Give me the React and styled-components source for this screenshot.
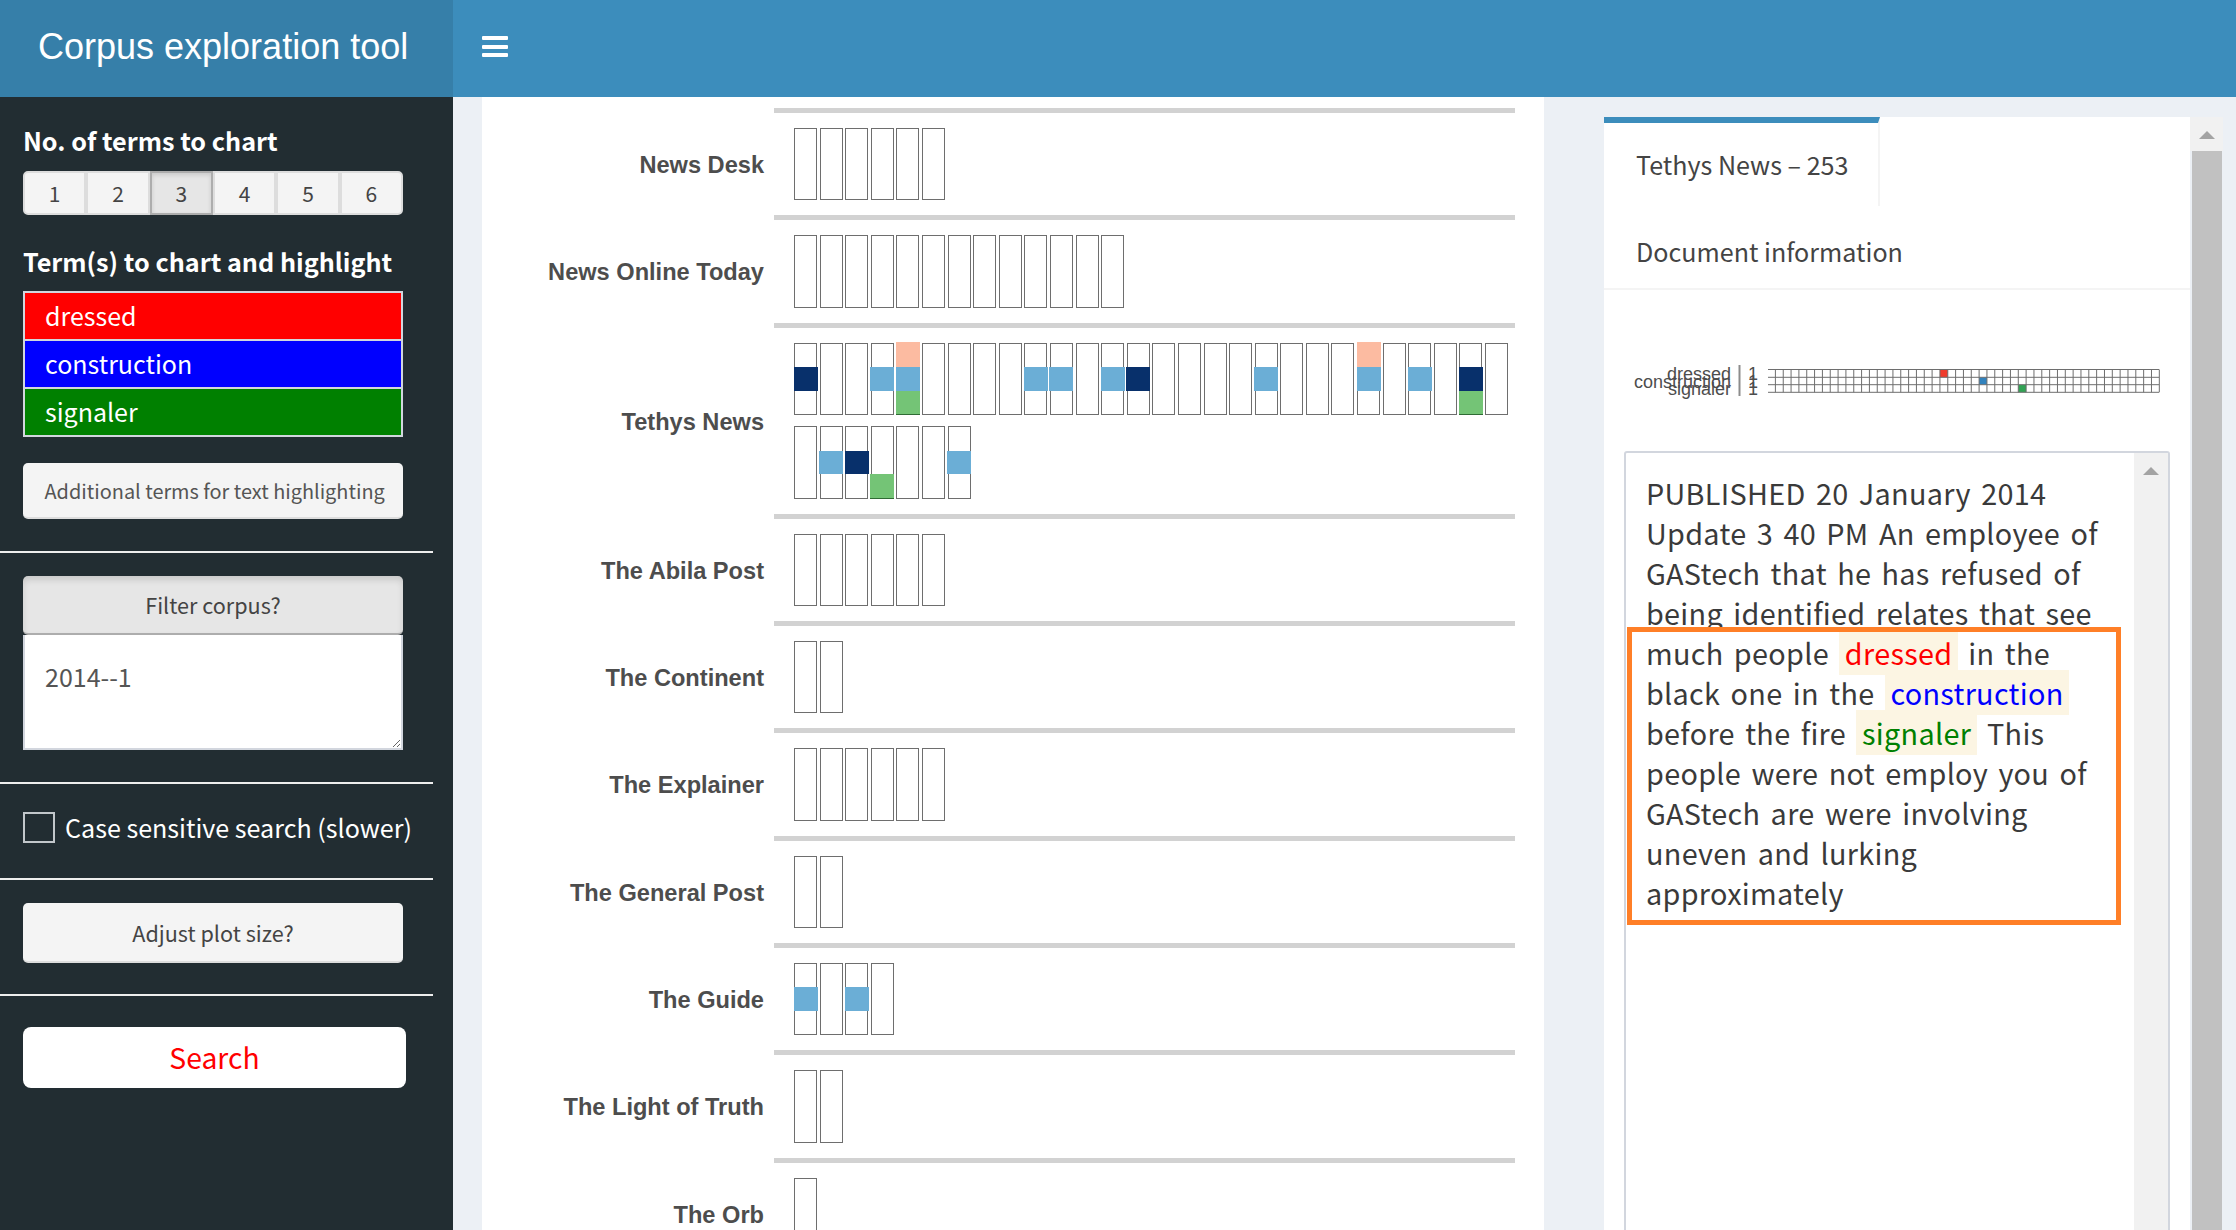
import React from "react"
import styled, { createGlobalStyle } from "styled-components"

const SANS = `"Noto Sans CJK SC", "Noto Sans", sans-serif`
const ARIAL = `"Liberation Sans", Arial, sans-serif`

const GlobalStyle = createGlobalStyle`
    html, body {
        margin: 0;
        height: 100%;
        overflow: hidden;
        background-color: #ecf0f5;
    }
    * {
        box-sizing: border-box;
    }
`

const Page = styled("div")`
    width: 2236px;
    height: 1230px;
    display: flex;
    flex-direction: column;
    overflow: hidden;
    font-family: ${SANS};
`

const Header = styled("header")`
    display: flex;
    flex: 0 0 97px;
    background-color: #3c8dbc;
`

const Logo = styled("div")`
    width: 453px;
    padding-left: 38px;
    background-color: #367fa9;
    color: #fff;
    font-family: ${ARIAL};
    font-size: 36px;
    line-height: 94px;
`

const MenuToggle = styled("button")`
    display: flex;
    flex-direction: column;
    justify-content: center;
    gap: 4.7px;
    width: 112px;
    padding: 0 0 4px 29px;
    background-color: transparent;
    border: 0;
`

const MenuBar = styled("span")`
    width: 26px;
    height: 4px;
    border-radius: 1px;
    background-color: #fff;
`

const Body = styled("div")`
    display: flex;
    flex: 1;
    min-height: 0;
`

const Sidebar = styled("aside")`
    flex: 0 0 453px;
    padding-top: 29px;
    background-color: #222d32;
`

const Group = styled("div")`
    padding-left: 23px;
    width: 433px;
`

const Heading = styled("div")`
    color: #fff;
    font-size: 25.2px;
    font-weight: 700;
    line-height: 28px;
    margin-top: ${(p) => p.$top || 0}px;
    margin-bottom: ${(p) => p.$bottom}px;
`

const ButtonRow = styled("div")`
    display: flex;
    width: 380px;
    height: 44px;
`

const NumberButton = styled("button")`
    flex: 1;
    padding: 0;
    background-color: ${(p) => (p.$active ? "#e6e6e6" : "#f4f4f4")};
    border: 2px solid ${(p) => (p.$active ? "#adadad" : "#ddd")};
    box-shadow: ${(p) => (p.$active ? "inset 0 2px 4px rgba(0, 0, 0, .125)" : "none")};
    color: #444;
    font-family: ${SANS};
    font-size: 21px;
    &:first-child {
        border-radius: 5px 0 0 5px;
    }
    &:last-child {
        border-radius: 0 5px 5px 0;
    }
`

const TermBox = styled("div")`
    display: flex;
    flex-direction: column;
    gap: 2px;
    width: 380px;
    height: 146px;
    padding: 2px;
    background-color: #d2d6de;
`

const Term = styled("div")`
    flex: 1;
    padding-left: 20px;
    background-color: ${(p) => p.$color};
    color: #fff;
    font-size: 25px;
    line-height: 45px;
`

const Placeholder = styled("div")`
    width: 380px;
    height: 56px;
    margin-top: 26px;
    padding-left: 21.5px;
    background-color: #f4f4f4;
    border-bottom: 2px solid #ddd;
    border-radius: 5px;
    color: #555;
    font-size: 19.9px;
    line-height: 55px;
    white-space: nowrap;
`

const Rule = styled("hr")`
    width: 433px;
    height: 2px;
    margin: ${(p) => p.$top}px 0 ${(p) => p.$bottom}px;
    background-color: #eee;
    border: 0;
`

const WideButton = styled("button")`
    display: block;
    width: 380px;
    height: ${(p) => p.$height}px;
    padding: 0;
    background-color: ${(p) => (p.$active ? "#e6e6e6" : "#f4f4f4")};
    border: 0;
    border-bottom: 2px solid ${(p) => (p.$active ? "#adadad" : "#ddd")};
    border-radius: 5px;
    box-shadow: ${(p) => (p.$active ? "inset 0 4px 6px rgba(0, 0, 0, .125)" : "none")};
    color: #444;
    font-family: ${SANS};
    font-size: 21.6px;
`

const FilterInput = styled("textarea")`
    display: block;
    width: 380px;
    height: 115px;
    padding: 21px 20px;
    background-color: #fff;
    border: 2px solid #d2d6de;
    border-top: 0;
    color: #555;
    font-family: ${SANS};
    font-size: 25px;
    line-height: 40px;
    outline: 0;
    resize: vertical;
`

const CheckRow = styled("label")`
    display: flex;
    align-items: center;
    gap: 10px;
    height: 31px;
    color: #fff;
    font-size: 25.1px;
    line-height: 29px;
    white-space: nowrap;
`

const CheckBox = styled("input")`
    appearance: none;
    flex: 0 0 32px;
    height: 31px;
    margin: 0;
    border: 2px solid #c2c7cb;
`

const SearchButton = styled("button")`
    display: block;
    width: 383px;
    height: 61px;
    padding: 0 0 2px;
    background-color: #fff;
    border: 0;
    border-radius: 8px;
    color: #f00;
    font-family: ${SANS};
    font-size: 28.3px;
`

const Content = styled("main")`
    display: flex;
    flex: 1;
    min-width: 0;
    padding-left: 29px;
`

const ChartPanel = styled("section")`
    flex: 0 0 1062px;
    padding: 11px 29px 0 0;
    background-color: #fff;
`

const FacetRow = styled("div")`
    display: grid;
    grid-template-columns: 282px 1fr;
    column-gap: 10px;
`

const FacetLabel = styled("div")`
    align-self: center;
    padding-top: 8px;
    color: #4d4d4d;
    font-family: ${ARIAL};
    font-size: 23.6px;
    font-weight: 700;
    text-align: right;
`

const FacetStrips = styled("div")`
    display: flex;
    flex-direction: column;
    gap: 11.3px;
    padding: 15px 0 15px 20px;
    border-top: 5px solid #d2d2d2;
`

const Strip = styled("div")`
    display: flex;
    gap: 2.6px;
    height: 72.33px;
`

const Bar = styled("div")`
    flex: 0 0 23px;
    display: grid;
    grid-template-rows: repeat(3, 1fr);
    background-color: #fff;
    border: 1.5px solid #6e6e6e;
`

const Segment = styled("div")`
    margin: 0 -1.5px;
    background-color: ${(p) => p.$color};
    ${(p) => p.$last && "margin-bottom: -1.5px; border-bottom: 1.5px solid #2f6b34;"}
    ${(p) => p.$first && "margin-top: -1.5px;"}
`

const DocumentColumn = styled("div")`
    display: flex;
    flex: 0 0 620px;
    margin: 20px 0 0 60px;
`

const DocumentBox = styled("section")`
    flex: 0 0 586px;
    background-color: #fff;
`

const Tab = styled("div")`
    width: 276px;
    height: 89px;
    padding-left: 32px;
    border-top: 6px solid #3c8dbc;
    border-right: 2px solid #f4f4f4;
    color: #444;
    font-size: 25.1px;
    line-height: 83px;
    white-space: nowrap;
`

const TabTitle = styled("div")`
    height: 84px;
    padding: 3px 0 0 32px;
    border-bottom: 2px solid #f4f4f4;
    color: #444;
    font-size: 25.1px;
    line-height: 84px;
`

const TimelinePlot = styled("svg")`
    display: block;
    margin: 74px 0 45px 26px;
`

const TextBox = styled("div")`
    position: relative;
    display: flex;
    width: 546px;
    height: 800px;
    margin-left: 20px;
    border: 2px solid #d2d6de;
    border-radius: 3px;
`

const TextBody = styled("p")`
    flex: 1;
    margin: 0;
    padding: 20px 24px 0 20px;
    color: #3a3a3a;
    font-size: 28.8px;
    letter-spacing: 0.3px;
    word-spacing: 3.6px;
    line-height: 40px;
`

const Mark = styled("mark")`
    padding: 2.2px 5.6px;
    background-color: #fcf5e3;
    color: ${(p) => p.$color};
`

const Callout = styled("div")`
    position: absolute;
    left: 1px;
    top: 174px;
    width: 494px;
    height: 298px;
    border: 5px solid #ff7f27;
    pointer-events: none;
`

const ScrollTrack = styled("div")`
    display: flex;
    flex-direction: column;
    align-items: center;
    flex: 0 0 ${(p) => p.$width}px;
    padding-top: ${(p) => p.$pad}px;
    background-color: #f1f1f1;
`

const ScrollArrow = styled("div")`
    width: 0;
    height: 0;
    border-left: 8px solid transparent;
    border-right: 8px solid transparent;
    border-bottom: 8px solid #a3a3a3;
`

const PageScroll = styled("div")`
    display: flex;
    flex-direction: column;
    flex: 0 0 33px;
`

const PageScrollHead = styled("div")`
    display: flex;
    justify-content: center;
    flex: 0 0 34px;
    padding-top: 14px;
    background-color: #f1f1f1;
`

const PageScrollThumb = styled("div")`
    flex: 1;
    margin: 0 1px 0 2px;
    background-color: #c1c1c1;
`

const COLORS = { s: "#fcbba1", l: "#6baed6", d: "#08306b", g: "#74c476" }

const bars = (count, marks = {}) =>
    Array.from({ length: count }, (_, ix) => marks[ix] || "")

const FACETS = [
    { name: "News Desk", strips: [bars(6)] },
    { name: "News Online Today", strips: [bars(13)] },
    {
        name: "Tethys News",
        strips: [
            bars(28, {
                0: ".d.",
                3: ".l.",
                4: "slg",
                9: ".l.",
                10: ".l.",
                12: ".l.",
                13: ".d.",
                18: ".l.",
                22: "sl.",
                24: ".l.",
                26: ".dg",
            }),
            bars(7, { 1: ".l.", 2: ".d.", 3: "..g", 6: ".l." }),
        ],
    },
    { name: "The Abila Post", strips: [bars(6)] },
    { name: "The Continent", strips: [bars(2)] },
    { name: "The Explainer", strips: [bars(6)] },
    { name: "The General Post", strips: [bars(2)] },
    { name: "The Guide", strips: [bars(4, { 0: ".l.", 2: ".l." })] },
    { name: "The Light of Truth", strips: [bars(2)] },
    { name: "The Orb", strips: [bars(1)] },
]

const ChartBar = ({ pattern }) => (
    <Bar>
        {[0, 1, 2].map((row) => {
            const key = pattern[row]
            return key && key !== "." ? (
                <Segment key={row} $color={COLORS[key]} $first={row === 0} $last={row === 2} />
            ) : (
                <div key={row} />
            )
        })}
    </Bar>
)

const Facet = ({ name, strips }) => (
    <FacetRow>
        <FacetLabel>{name}</FacetLabel>
        <FacetStrips>
            {strips.map((strip, ix) => (
                <Strip key={ix}>
                    {strip.map((pattern, jx) => <ChartBar key={jx} pattern={pattern} />)}
                </Strip>
            ))}
        </FacetStrips>
    </FacetRow>
)

const Timeline = () => {
    const pitch = 7.835
    const ys = [5.5, 13.3, 20.7, 28.3]
    const left = 138
    const first = 145.4
    const right = 529
    const hits = [
        { col: 21, row: 0, fill: "#ef3b2c" },
        { col: 26, row: 1, fill: "#3182bd" },
        { col: 31, row: 2, fill: "#31a354" },
    ]
    return (
        <TimelinePlot width="535" height="42" viewBox="0 0 535 42">
            <g fontFamily={ARIAL} fontSize="18" fill="#4d4d4d" textAnchor="end">
                <text x="101" y="16">dressed</text>
                <text x="101" y="24">construction</text>
                <text x="101" y="31">signaler</text>
                <text x="128" y="16">1</text>
                <text x="128" y="24">1</text>
                <text x="128" y="31">1</text>
            </g>
            <line x1="109.5" y1="1" x2="109.5" y2="32" stroke="#8c8c8c" strokeWidth="2" />
            {hits.map((h) => (
                <rect
                    key={h.col}
                    x={first + h.col * pitch}
                    y={ys[h.row]}
                    width={pitch}
                    height={ys[h.row + 1] - ys[h.row]}
                    fill={h.fill}
                />
            ))}
            <g stroke="#6e6e6e" strokeWidth="1">
                {ys.map((y) => <line key={y} x1={left} y1={y} x2={right} y2={y} />)}
                {Array.from({ length: 50 }, (_, ix) => (
                    <line
                        key={ix}
                        x1={first + ix * pitch}
                        y1={ys[0]}
                        x2={first + ix * pitch}
                        y2={ys[3]}
                    />
                ))}
            </g>
        </TimelinePlot>
    )
}

const App = () => {
    return (
        <Page>
            <GlobalStyle />
            <Header>
                <Logo>Corpus exploration tool</Logo>
                <MenuToggle aria-label="Toggle navigation">
                    <MenuBar />
                    <MenuBar />
                    <MenuBar />
                </MenuToggle>
            </Header>
            <Body>
                <Sidebar>
                    <Group>
                        <Heading $bottom={17}>No. of terms to chart</Heading>
                        <ButtonRow>
                            {[1, 2, 3, 4, 5, 6].map((n) => (
                                <NumberButton key={n} $active={n === 3}>{n}</NumberButton>
                            ))}
                        </ButtonRow>
                        <Heading $top={32} $bottom={16}>Term(s) to chart and highlight</Heading>
                        <TermBox>
                            <Term $color="#f00">dressed</Term>
                            <Term $color="#00f">construction</Term>
                            <Term $color="#008000">signaler</Term>
                        </TermBox>
                        <Placeholder>Additional terms for text highlighting</Placeholder>
                    </Group>
                    <Rule $top={32} $bottom={23} />
                    <Group>
                        <WideButton $active $height={59}>Filter corpus?</WideButton>
                        <FilterInput readOnly value="2014--1" />
                    </Group>
                    <Rule $top={32} $bottom={28} />
                    <Group>
                        <CheckRow>
                            <CheckBox type="checkbox" />
                            Case sensitive search (slower)
                        </CheckRow>
                    </Group>
                    <Rule $top={35} $bottom={23} />
                    <Group>
                        <WideButton $height={60}>Adjust plot size?</WideButton>
                    </Group>
                    <Rule $top={31} $bottom={31} />
                    <Group>
                        <SearchButton>Search</SearchButton>
                    </Group>
                </Sidebar>
                <Content>
                    <ChartPanel>
                        {FACETS.map((facet) => <Facet key={facet.name} {...facet} />)}
                    </ChartPanel>
                    <DocumentColumn>
                        <DocumentBox>
                            <Tab>Tethys News – 253</Tab>
                            <TabTitle>Document information</TabTitle>
                            <Timeline />
                            <TextBox>
                                <TextBody>
                                    PUBLISHED 20 January 2014 Update 3 40 PM An employee of GAStech
                                    that he has refused of being identified relates that see much
                                    people <Mark $color="#f00">dressed</Mark> in the black one in
                                    the <Mark $color="#00f">construction</Mark> before the
                                    fire <Mark $color="#008000">signaler</Mark> This people were
                                    not employ you of GAStech are were involving uneven and lurking
                                    approximately
                                </TextBody>
                                <ScrollTrack $width={34} $pad={14}>
                                    <ScrollArrow />
                                </ScrollTrack>
                                <Callout />
                            </TextBox>
                        </DocumentBox>
                        <PageScroll>
                            <PageScrollHead>
                                <ScrollArrow />
                            </PageScrollHead>
                            <PageScrollThumb />
                        </PageScroll>
                    </DocumentColumn>
                </Content>
            </Body>
        </Page>
    )
}

export default App
